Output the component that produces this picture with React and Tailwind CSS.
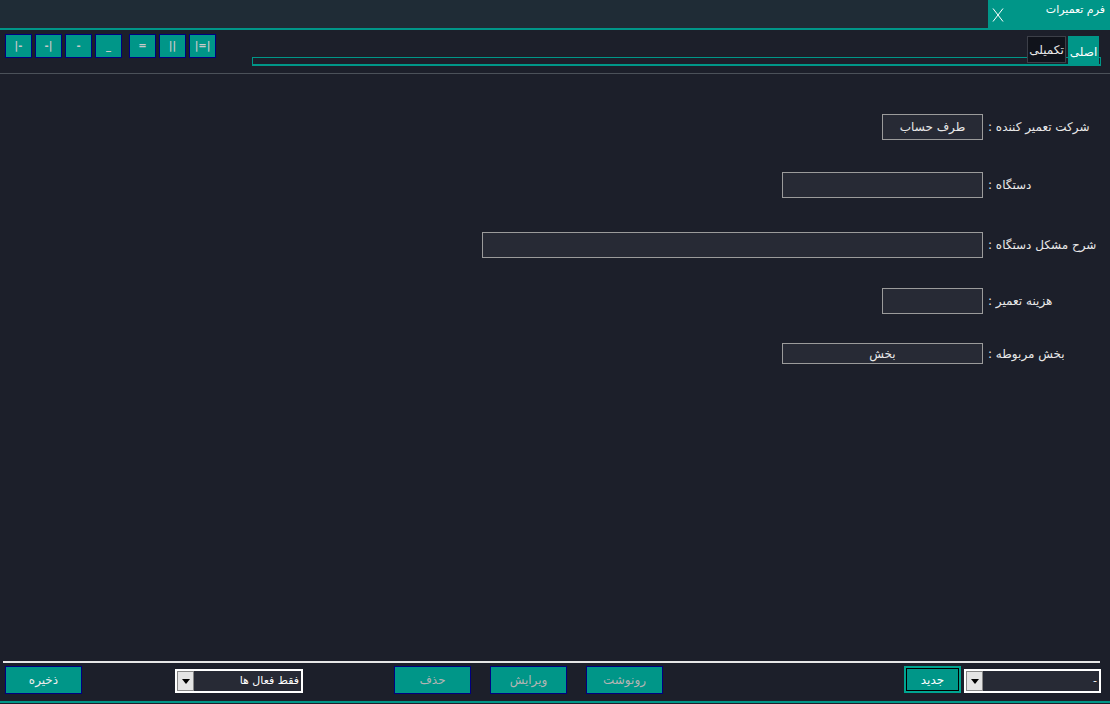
import React from "react";

const font = { fontFamily: '"DejaVu Sans", Tahoma, sans-serif' };

function ToolButton({ children }) {
  return (
    <div className="w-[27px] h-[24px] bg-[#009688] border border-[#000080] flex items-center justify-center text-[10px] font-bold text-[#c8c8c8] leading-none">
      {children}
    </div>
  );
}

function Field({ label, width, height = "h-[26px]", value, className }) {
  return (
    <div className={"flex items-center " + className}>
      <div className="w-[983px] flex justify-end">
        <div
          className={
            width +
            " " +
            height +
            " bg-[#272a35] border border-[#9b9b9b] flex items-center justify-center text-[12px] text-[#e8e8e8]"
          }
        >
          <span dir="rtl">{value}</span>
        </div>
      </div>
      <div className="ml-[5px] text-[12px] text-[#e8e8e8] whitespace-nowrap" dir="rtl">
        {label}
      </div>
    </div>
  );
}

function ActionButton({ children, light }) {
  return (
    <div
      className={
        "w-[77px] h-[28px] bg-[#009688] border border-[#000080] flex items-center justify-center text-[12px] " +
        (light ? "text-[#ececec]" : "text-[#b4b4b4]")
      }
    >
      <span dir="rtl">{children}</span>
    </div>
  );
}

function Combo({ width, value }) {
  return (
    <div className={width + " h-[24px] bg-white p-[2px] flex"}>
      <div className="w-[17px] h-full bg-[#e4e4e4] border border-[#888] flex items-center justify-center">
        <svg width="8" height="5" viewBox="0 0 8 5">
          <path d="M0 0h8L4 5z" fill="#000" />
        </svg>
      </div>
      <div className="flex-1 h-full bg-[#272a35] flex items-center justify-end pr-[2px] text-[11px] text-white">
        <span dir="rtl">{value}</span>
      </div>
    </div>
  );
}

export default function App() {
  return (
    <div className="w-[1110px] h-[704px] bg-[#1c1f2a] flex flex-col overflow-hidden" style={font}>
      {/* title bar */}
      <div className="h-[28px] bg-[#1f2c36] flex justify-end shrink-0">
        <div className="w-[122px] h-full bg-[#009688] flex items-start">
          <svg className="mt-[8px] ml-[4px]" width="12" height="14" viewBox="0 0 12 14">
            <path d="M1 0.5L11 13.5M11 0.5L1 13.5" stroke="#ffffff" strokeWidth="1" fill="none" />
          </svg>
          <div className="ml-auto mr-[5px] mt-[2px] text-[11px] text-white" dir="rtl">
            فرم تعمیرات
          </div>
        </div>
      </div>
      <div className="h-[2px] bg-[#009688] shrink-0" />

      {/* toolbar + tabs */}
      <div className="relative h-[43px] shrink-0 flex items-start pl-[5px] pt-[4px]">
        <div className="flex gap-[3px]">
          <ToolButton>|-</ToolButton>
          <ToolButton>-|</ToolButton>
          <ToolButton>-</ToolButton>
          <ToolButton>_</ToolButton>
        </div>
        <div className="flex gap-[3px] ml-[7px]">
          <ToolButton>=</ToolButton>
          <ToolButton>||</ToolButton>
          <ToolButton>|=|</ToolButton>
        </div>
        <div className="flex-1 ml-[36px] mr-[9px] mt-[23px] h-[9px] border-t border-l border-r border-[#009688] border-b-2" />
        <div className="absolute right-[11px] top-[6px] flex items-start">
          <div className="w-[39px] h-[27px] bg-[#10131b] border border-[#3c3f48] flex items-end justify-center pb-[6px] text-[12px] text-[#e8e8e8] leading-none">
            <span dir="rtl">تکمیلی</span>
          </div>
          <div className="ml-[2px] w-[31px] h-[30px] bg-[#009688] flex items-center justify-center pt-[2px] text-[12px] text-white leading-none">
            <span dir="rtl">اصلی</span>
          </div>
        </div>
      </div>
      <div className="h-[1px] bg-[#4b5159] shrink-0" />

      {/* form */}
      <div className="flex-1 flex flex-col">
        <Field className="mt-[40px]" label="شرکت تعمیر کننده :" width="w-[101px]" value="طرف حساب" />
        <Field className="mt-[32px]" label="دستگاه :" width="w-[201px]" />
        <Field className="mt-[34px]" label="شرح مشکل دستگاه :" width="w-[501px]" />
        <Field className="mt-[30px]" label="هزینه تعمیر :" width="w-[101px]" />
        <Field className="mt-[29px]" label="بخش مربوطه :" width="w-[201px]" height="h-[21px]" value="بخش" />
      </div>

      {/* bottom bar */}
      <div className="h-[2px] bg-[#e6e6e6] ml-[3px] mr-[10px] shrink-0" />
      <div className="h-[38px] shrink-0 flex items-start pt-[3px] pl-[5px]">
        <ActionButton light>ذخیره</ActionButton>
        <div className="ml-[93px] mt-[3px]">
          <Combo width="w-[128px]" value="فقط فعال ها" />
        </div>
        <div className="ml-[91px] flex gap-[19px]">
          <ActionButton>حذف</ActionButton>
          <ActionButton>ویرایش</ActionButton>
          <ActionButton>رونوشت</ActionButton>
        </div>
        <div className="ml-[241px] w-[57px] h-[27px] border-2 border-[#00a591] bg-black p-[1px]">
          <div className="w-full h-full bg-[#009688] flex items-center justify-center text-[12px] text-white">
            <span dir="rtl">جدید</span>
          </div>
        </div>
        <div className="ml-[3px] mt-[3px]">
          <Combo width="w-[137px]" value="-" />
        </div>
      </div>
      <div className="h-[2px] bg-[#009688] shrink-0" />
      <div className="h-[1px] shrink-0" />
    </div>
  );
}
